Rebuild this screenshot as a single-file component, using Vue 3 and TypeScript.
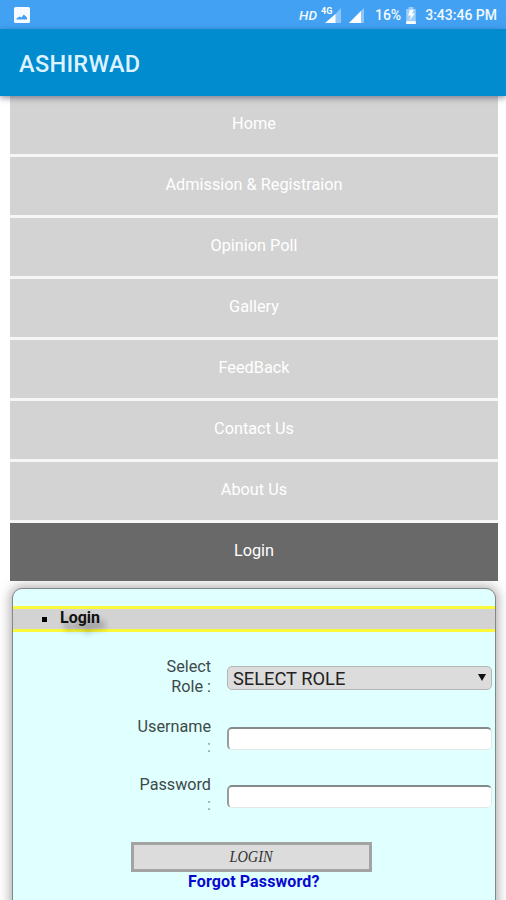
<script setup lang="ts">
import { ref } from 'vue'

const menu: string[] = [
  'Home',
  'Admission & Registraion',
  'Opinion Poll',
  'Gallery',
  'FeedBack',
  'Contact Us',
  'About Us',
  'Login',
]
const active = ref('Login')
const username = ref('')
const password = ref('')
</script>

<template>
  <div class="screen">
    <div class="status">
      <svg class="photo" viewBox="0 0 16 16">
        <rect width="16" height="16" rx="1.5" fill="#f6fbff" />
        <path d="M2.500 12.500V11.500L5.500 9.500l2 1 2.300-3 3.200 3v2z" fill="#42a1f3" />
      </svg>
      <span class="hd">HD</span>
      <svg class="signals" viewBox="0 0 46 20">
        <path d="M20 3v15H6z" fill="#8dc6fa" />
        <path d="M14.500 9v9H4z" fill="#fff" />
        <text x="0" y="8.500" class="net">4G</text>
        <path d="M43 3v15H28z" fill="#8dc6fa" />
        <path d="M40 6v12H28z" fill="#fff" />
      </svg>
      <span class="percent">16%</span>
      <svg class="battery" viewBox="0 0 12 18">
        <path d="M3.500 0h5v2H11v16H1V2h2.500z" fill="#9fd0fa" />
        <path d="M1 15h10v3H1z" fill="#fff" />
        <path d="M9 3H5L3 9h3l-1.500 5L10 7H7z" fill="#fff" />
      </svg>
      <span class="time">3:43:46 PM</span>
    </div>

    <header class="appbar"><h1>ASHIRWAD</h1></header>

    <main>
      <nav>
        <a
          v-for="item in menu"
          :key="item"
          class="item"
          :class="{ active: item === active }"
          @click="active = item"
        >{{ item }}</a>
      </nav>

      <section class="card">
        <div class="band"><span class="bullet"></span><span class="heading">Login</span></div>
        <form @submit.prevent>
          <div class="row role">
            <label>Select<br />Role :</label>
            <div class="select"><span>SELECT ROLE</span><i></i></div>
          </div>
          <div class="row">
            <label>Username<br /><span class="colon">:</span></label>
            <input v-model="username" type="text" />
          </div>
          <div class="row">
            <label>Password<br /><span class="colon">:</span></label>
            <input v-model="password" type="password" />
          </div>
          <button class="submit"><span>LOGIN</span></button>
          <a class="forgot">Forgot Password?</a>
        </form>
      </section>
    </main>
  </div>
</template>

<style>
body {
  margin: 0;
  overflow: hidden;
}
</style>

<style scoped>
.screen {
  width: 506px;
  height: 900px;
  overflow: hidden;
  background: #fff;
  font-family: Roboto, "Liberation Sans", sans-serif;
  display: flex;
  flex-direction: column;
}
.status {
  flex: none;
  height: 29px;
  box-sizing: border-box;
  background: #42a1f3;
  color: #f2f9ff;
  display: flex;
  align-items: center;
  padding: 1px 9px 0 14px;
  font-size: 14px;
  font-weight: 500;
  white-space: nowrap;
}
.photo {
  width: 16px;
  height: 16px;
}
.hd {
  margin-left: auto;
  font-style: italic;
  font-weight: 500;
  font-size: 13.500px;
}
.signals {
  width: 46px;
  height: 20px;
  margin: 0 0 0 4px;
}
.net {
  font-size: 9px;
  font-weight: 700;
  fill: #fff;
}
.percent {
  margin-left: 8px;
}
.battery {
  width: 12px;
  height: 17px;
  margin: 0 8px 0 4px;
}
.appbar {
  flex: none;
  height: 67px;
  background: #008ccf;
  box-shadow: 0 2px 6px rgba(40, 40, 70, 0.5);
  position: relative;
  display: flex;
  align-items: center;
  padding-left: 19px;
}
h1 {
  margin: 2px 0 0;
  font-size: 23.500px;
  line-height: 28px;
  font-weight: 500;
  letter-spacing: 0.3px;
  color: #dff2ff;
}
main {
  padding: 0 8px 0 10px;
}
nav {
  display: flex;
  flex-direction: column;
  gap: 3px;
  background: #f6f6f6;
}
.item {
  height: 58px;
  box-sizing: border-box;
  padding-top: 18px;
  line-height: 20px;
  text-align: center;
  font-size: 16.300px;
  color: #fff;
  background: #d3d3d3;
}
.item.active {
  background: #696969;
}
.card {
  margin: 7px 2px 0 2px;
  height: 340px;
  box-sizing: border-box;
  border: 1px solid #808888;
  border-radius: 10px;
  background: #e0ffff;
  box-shadow: 0 0 11px 2px rgba(100, 90, 95, 0.5);
  padding-top: 17px;
}
.band {
  height: 26px;
  box-sizing: border-box;
  border: solid #fbf83c;
  border-width: 3px 0;
  background: #d3d3d3;
  display: flex;
  align-items: center;
  padding-left: 29px;
}
.bullet {
  width: 5px;
  height: 5px;
  background: #000;
}
.heading {
  margin: -3px 0 0 13px;
  font-size: 16px;
  line-height: 18px;
  font-weight: 700;
  color: #111;
  text-shadow: 5px 7px 6px rgba(0, 0, 0, 0.4);
}
form {
  display: flex;
  flex-direction: column;
  padding: 25px 3px 0 0;
}
.row {
  display: flex;
  justify-content: flex-end;
  align-items: flex-start;
  height: 58px;
}
.row.role {
  height: 60px;
}
label {
  text-align: right;
  font-size: 16.200px;
  line-height: 20px;
  color: #3d4949;
  margin-right: 16px;
}
.colon {
  color: #7b9999;
}
.select {
  width: 265px;
  height: 24px;
  box-sizing: border-box;
  margin-top: 9px;
  border: 1.500px solid #b5b5b5;
  border-radius: 5px;
  background: #dcdcdc;
  display: flex;
  align-items: center;
  justify-content: space-between;
  padding: 2px 5px 0;
  font-size: 18.300px;
  line-height: 20px;
  color: #222;
}
.select i {
  border: solid transparent;
  border-width: 7px 4px 0;
  border-top-color: #111;
  margin-bottom: 4px;
}
input {
  width: 265px;
  height: 23px;
  box-sizing: border-box;
  margin: 10px 0 0;
  padding: 0 5px;
  border: 1px solid #e2e8e8;
  border-top: 2px solid #858b8b;
  border-left: 2px solid #959d9d;
  border-radius: 5px;
  background: #fff;
  font: 16px Roboto, sans-serif;
  outline: none;
}
.submit {
  width: 241px;
  height: 30px;
  margin: 9px 0 0 118px;
  padding: 0;
  border: 3px solid #a3a3a3;
  background: #dcdcdc;
  font: italic 16px "Liberation Serif", serif;
  line-height: 20px;
  color: #333;
}
.submit span {
  display: inline-block;
  transform: scaleX(0.9);
  margin-top: -2px;
}
.forgot {
  align-self: flex-start;
  margin: 0 0 0 175px;
  font-size: 16px;
  line-height: 20px;
  font-weight: 700;
  letter-spacing: 0.12px;
  color: #0808cf;
}
</style>
